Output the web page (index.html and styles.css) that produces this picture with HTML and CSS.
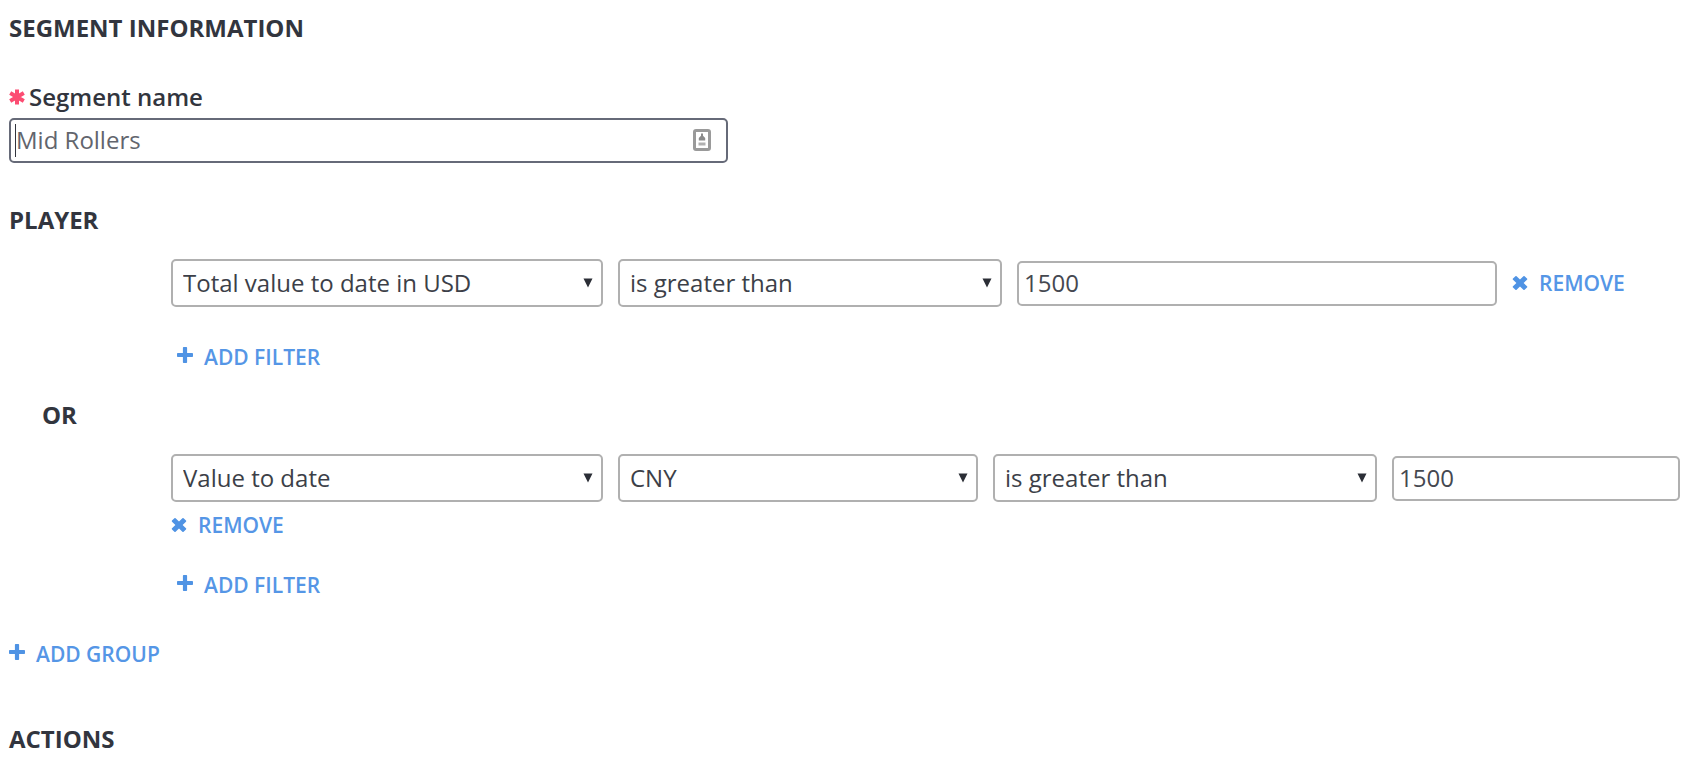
FILE: index.html
```html
<!DOCTYPE html>
<html lang="en">
<head>
<meta charset="utf-8">
<meta name="viewport" content="width=device-width, initial-scale=1">
<title>Segment</title>
<link rel="stylesheet" href="styles.css">
</head>
<body>
<svg class="sprite" aria-hidden="true">
  <symbol id="plus" viewBox="0 0 16 16"><path d="M6.7 0h2.6q.8 0 .8.8v5.1h5.1q.8 0 .8.8v2.6q0 .8-.8.8h-5.1v5.1q0 .8-.8.8H6.7q-.8 0-.8-.8v-5.1H.8q-.8 0-.8-.8V6.7q0-.8.8-.8h5.1V.8q0-.8.8-.8z"/></symbol>
  <symbol id="times" viewBox="0 0 16 16"><path d="M1 3.6 3.4 1.2q.6-.6 1.2 0L8 4.6l3.4-3.4q.6-.6 1.2 0L15 3.6q.6.6 0 1.2L11.6 8l3.4 3.3q.6.6 0 1.2l-2.4 2.3q-.6.6-1.2 0L8 11.4l-3.4 3.4q-.6.6-1.2 0L1 12.5q-.6-.6 0-1.2L4.4 8 1 4.8q-.6-.6 0-1.2z"/></symbol>
  <symbol id="arrow" viewBox="0 0 10 10"><path d="M.5.5h9L5 9.5z"/></symbol>
</svg>
<form class="segment">
  <section>
    <h2 class="title">SEGMENT INFORMATION</h2>
    <label class="label" for="name">
      <svg class="required" viewBox="0 0 16 16" aria-hidden="true"><path d="M8 .5v15M1.2 4.1l13.6 7.8M14.8 4.1 1.2 11.9"/></svg>
      Segment name
    </label>
    <div class="name-field">
      <input class="input input-focused" id="name" type="text" value="Mid Rollers">
      <span class="caret"></span>
      <svg class="contact" viewBox="0 0 18 22" aria-hidden="true">
        <rect class="contact-frame" x="1.5" y="1.5" width="15" height="19" rx="1.5"/>
        <path class="contact-person" d="M8 4.5h2v2.2l2.2 2.3v2.5H5.8V9L8 6.7z"/>
        <path class="contact-line" d="M5.5 13.5h7v3h-7z"/>
      </svg>
    </div>
  </section>

  <section class="player">
    <h2 class="title">PLAYER</h2>
    <div class="group">
      <div class="filter filter-three">
        <div class="pick"><select class="select" aria-label="Filter"><option>Total value to date in USD</option></select><svg class="arrow" aria-hidden="true"><use href="#arrow"/></svg></div>
        <div class="pick"><select class="select" aria-label="Condition"><option>is greater than</option></select><svg class="arrow" aria-hidden="true"><use href="#arrow"/></svg></div>
        <input class="input" type="text" value="1500" aria-label="Value">
        <button class="action" type="button"><svg class="icon" aria-hidden="true"><use href="#times"/></svg>REMOVE</button>
      </div>
      <button class="action add-first" type="button"><svg class="icon icon-plus" aria-hidden="true"><use href="#plus"/></svg>ADD FILTER</button>
    </div>
    <h2 class="title or">OR</h2>
    <div class="group">
      <div class="filter filter-four">
        <div class="pick"><select class="select" aria-label="Filter"><option>Value to date</option></select><svg class="arrow" aria-hidden="true"><use href="#arrow"/></svg></div>
        <div class="pick"><select class="select" aria-label="Currency"><option>CNY</option></select><svg class="arrow" aria-hidden="true"><use href="#arrow"/></svg></div>
        <div class="pick"><select class="select" aria-label="Condition"><option>is greater than</option></select><svg class="arrow" aria-hidden="true"><use href="#arrow"/></svg></div>
        <input class="input" type="text" value="1500" aria-label="Value">
        <button class="action" type="button"><svg class="icon" aria-hidden="true"><use href="#times"/></svg>REMOVE</button>
      </div>
      <button class="action add-next" type="button"><svg class="icon icon-plus" aria-hidden="true"><use href="#plus"/></svg>ADD FILTER</button>
    </div>
    <button class="action add-group" type="button"><svg class="icon icon-plus" aria-hidden="true"><use href="#plus"/></svg>ADD GROUP</button>
  </section>

  <section class="actions">
    <h2 class="title">ACTIONS</h2>
  </section>
</form>
</body>
</html>
```
FILE: styles.css
```css
* {
  box-sizing: border-box;
}

body {
  margin: 0;
  background: #fff;
  color: #32353e;
  font-family: "Open Sans", "Noto Sans", sans-serif;
  font-size: 24px;
  line-height: 34px;
}

.sprite {
  display: none;
}

.segment {
  padding: 11px 25px 0 9px;
}

.title {
  margin: 0;
  font-size: 24px;
  font-weight: 700;
}

.label {
  display: flex;
  align-items: center;
  gap: 4px;
  margin-top: 35px;
  font-weight: 600;
}

.required {
  width: 16px;
  height: 16px;
  fill: none;
  stroke: #fc4c72;
  stroke-width: 4;
}

.name-field {
  position: relative;
  width: 43%;
  margin-top: 4px;
}

.input,
.select {
  display: block;
  width: 100%;
  border: 2px solid #b0b0b0;
  border-radius: 5px;
  background: #fff;
  color: #454850;
  font: inherit;
  line-height: 34px;
}

.input {
  height: 45px;
  padding: 0 5px 2px;
}

.input-focused {
  border-color: #666a78;
  color: #62656d;
  outline: none;
}

.caret {
  position: absolute;
  top: 6px;
  left: 6px;
  width: 1px;
  height: 33px;
  background: #32353e;
}

.contact {
  position: absolute;
  top: 11px;
  right: 17px;
  width: 18px;
  height: 22px;
}

.contact-frame {
  fill: #fff;
  stroke: #9a9a9a;
  stroke-width: 3;
}

.contact-person {
  fill: #8a8a8a;
}

.contact-line {
  fill: #b0b0b0;
}

.player {
  margin-top: 40px;
}

.group {
  margin-top: 22px;
  padding-left: 162px;
}

.filter {
  display: grid;
  align-items: center;
  column-gap: 15px;
  row-gap: 8px;
}

.filter-three {
  grid-template-columns: 18fr 16fr 20fr 7fr;
}

.filter-four {
  grid-template-columns: 18fr 15fr 16fr 12fr;
}

.pick {
  position: relative;
}

.select {
  height: 48px;
  padding: 0 32px 0 10px;
  appearance: none;
  color: #3c3f48;
}

.arrow {
  position: absolute;
  top: 19px;
  right: 10px;
  width: 10px;
  height: 10px;
  fill: #2b2e36;
  pointer-events: none;
}

.action {
  display: flex;
  align-items: center;
  gap: 11px;
  padding: 0;
  border: 0;
  background: none;
  color: #5596e6;
  font: inherit;
  font-size: 21px;
  font-weight: 600;
  line-height: 30px;
  white-space: nowrap;
}

.icon {
  width: 16px;
  height: 16px;
  fill: #4f93e4;
}

.icon-plus {
  margin-bottom: 4px;
}

.add-first {
  margin: 35px 0 0 6px;
}

.or {
  margin: 26px 0 0 33px;
}

.add-next {
  margin: 30px 0 0 6px;
}

.add-group {
  margin-top: 39px;
}

.actions {
  margin-top: 53px;
}
```
